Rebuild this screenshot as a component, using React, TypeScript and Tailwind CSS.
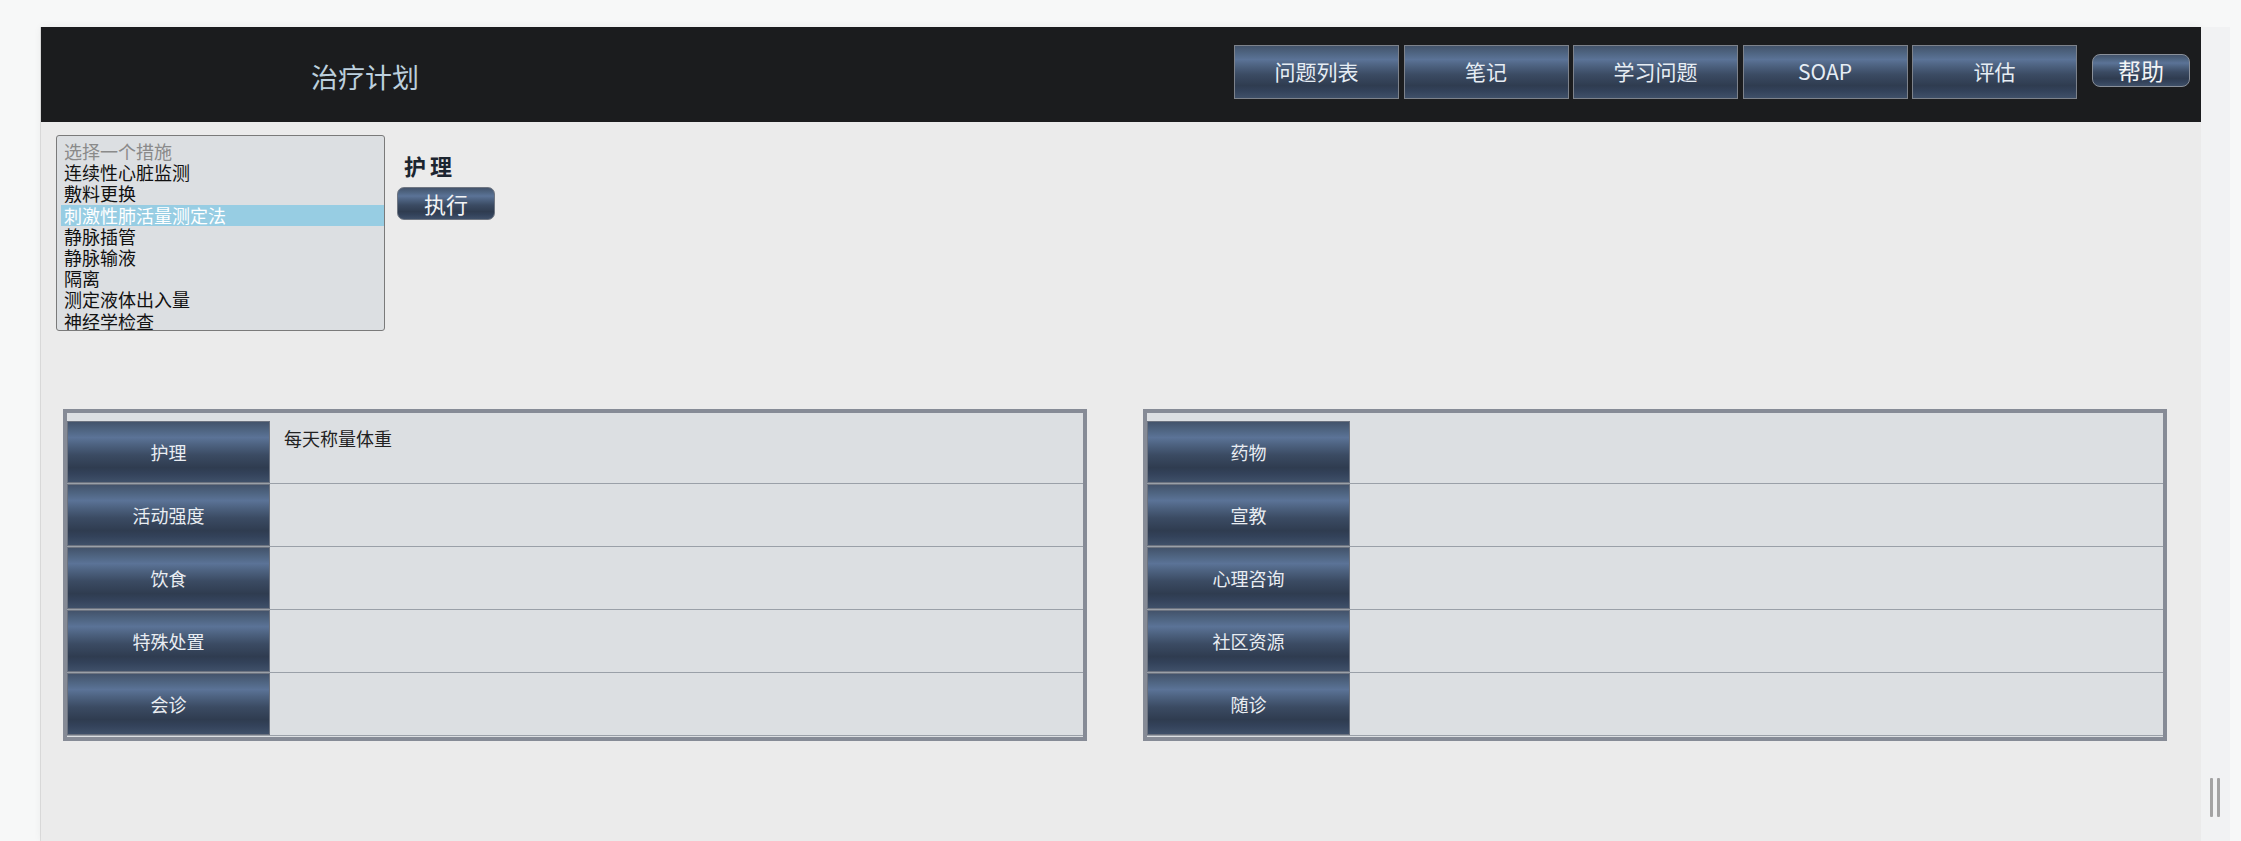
import React from "react";

const GRAD =
  "bg-[linear-gradient(to_bottom,#43536b_0%,#4f6582_14%,#5b7397_26%,#4d6280_38%,#3b4b63_55%,#2f3c50_76%,#33425a_86%,#3f5069_100%)]";

const font = { fontFamily: '"Noto Sans CJK SC", "Noto Sans", sans-serif' };

const navItems = ["问题列表", "笔记", "学习问题", "SOAP", "评估"];
const options = [
  "连续性心脏监测",
  "敷料更换",
  "刺激性肺活量测定法",
  "静脉插管",
  "静脉输液",
  "隔离",
  "测定液体出入量",
  "神经学检查",
];

function Table({ rows }: { rows: { label: string; value?: string }[] }) {
  return (
    <div className="w-[1024px] border-4 border-[#868b96] bg-[#dcdfe2] pt-[8px] pb-[1px]">
      {rows.map((r) => (
        <div key={r.label} className="flex h-[63px] border-b border-[#9aa0a8]">
          <div
            className={`w-[203px] h-[62px] shrink-0 flex items-center justify-center border border-[#6c7380] text-[18px] text-[#e9edf2] ${GRAD}`}
          >
            {r.label}
          </div>
          <div className="flex-1 pl-[14px] pt-[4px] text-[18px] leading-[26px] text-[#222]">
            {r.value ?? ""}
          </div>
        </div>
      ))}
    </div>
  );
}

export default function App() {
  return (
    <div
      className="relative w-[2241px] h-[841px] overflow-hidden bg-[#f7f8f8] flex"
      style={font}
    >
      <div className="w-[40px] shrink-0" />
      <div className="w-[1px] shrink-0 mt-[27px] bg-[#dedede]" />
      <div className="w-[2160px] shrink-0 mt-[27px] h-[814px] bg-[#ebebeb] flex flex-col shadow-[0_0_8px_rgba(0,0,0,0.06)]">
        {/* header */}
        <div className="h-[95px] bg-[#1b1c1e] flex items-center">
          <div className="ml-[270px] text-[27px] font-normal text-[#bccfdd] leading-none pt-[4px]">
            治疗计划
          </div>
          <div className="ml-auto flex items-center mb-[5px]">
            <div className="flex gap-[4.5px]">
              {navItems.map((n) => (
                <div
                  key={n}
                  className={`w-[165px] h-[54px] flex items-center justify-center border border-[#7d828b] text-[21px] text-[#e6edf4] ${GRAD}`}
                >
                  {n}
                </div>
              ))}
            </div>
            <div
              className={`ml-[15px] mr-[11px] mb-[4px] w-[98px] h-[33px] rounded-[8px] border border-[#8a909a] flex items-center justify-center text-[23px] text-[#f2f4f6] ${GRAD}`}
            >
              帮助
            </div>
          </div>
        </div>

        {/* top controls */}
        <div className="flex pl-[15px] pt-[13px]">
          <div className="w-[329px] h-[196px] border border-[#7a7a7a] rounded-[3px] bg-[#dcdfe2] pl-[4px] pt-[5px] overflow-hidden text-[18px] leading-[21.2px] text-[#111] font-normal">
            <div className="pl-[3px] text-[#8a8a8a] whitespace-nowrap">选择一个措施</div>
            {options.map((o, i) => (
              <div
                key={o}
                className={`pl-[3px] whitespace-nowrap ${
                  i === 2 ? "bg-[#97cde3] text-white" : ""
                }`}
              >
                {o}
              </div>
            ))}
          </div>
          <div className="ml-[12px] flex flex-col">
            <div className="ml-[7px] mt-[17px] text-[22px] font-bold leading-[26px] tracking-[4px] text-[#1c2530]">
              护理
            </div>
            <div
              className={`mt-[9px] w-[98px] h-[33px] rounded-[7px] border border-[#6f7682] flex items-center justify-center text-[22px] text-[#f2f4f6] ${GRAD}`}
            >
              执行
            </div>
          </div>
        </div>

        {/* tables */}
        <div className="flex pl-[22px] mt-[78px] gap-[56px]">
          <Table
            rows={[
              { label: "护理", value: "每天称量体重" },
              { label: "活动强度" },
              { label: "饮食" },
              { label: "特殊处置" },
              { label: "会诊" },
            ]}
          />
          <Table
            rows={[
              { label: "药物" },
              { label: "宣教" },
              { label: "心理咨询" },
              { label: "社区资源" },
              { label: "随诊" },
            ]}
          />
        </div>
      </div>
      <div className="w-[29px] shrink-0 mt-[27px] bg-[#f1f2f3]" />

      {/* resize handle */}
      <div className="absolute left-[2210px] top-[778px] flex gap-[4px]">
        <div className="w-[3px] h-[39px] rounded-[1px] bg-[#a3a3a3]" />
        <div className="w-[3px] h-[39px] rounded-[1px] bg-[#a3a3a3]" />
      </div>
    </div>
  );
}
